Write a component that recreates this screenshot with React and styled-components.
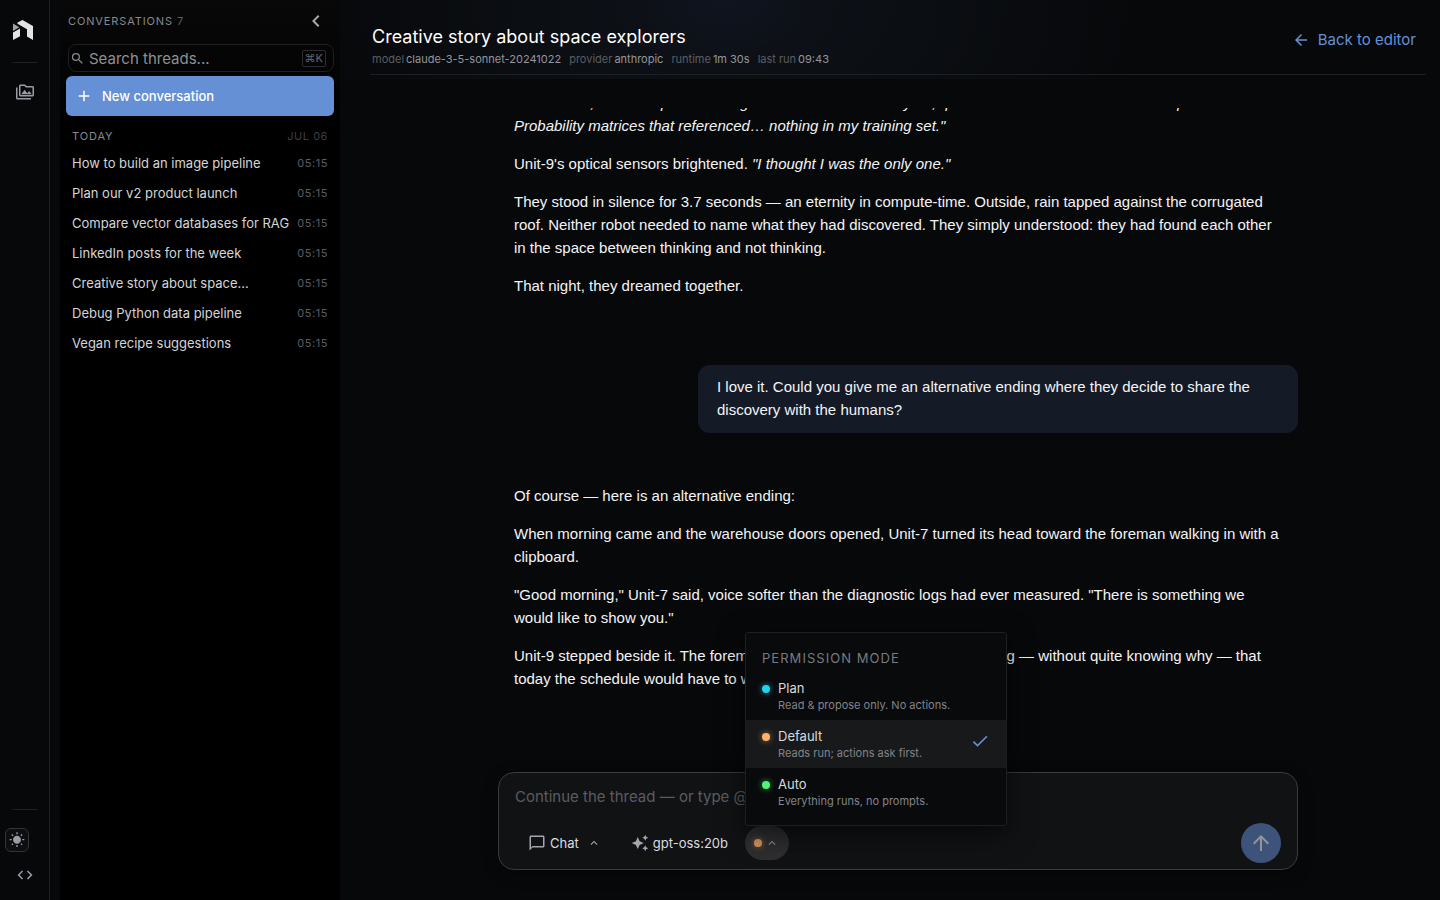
import React, { useState } from 'react';
import styled, { createGlobalStyle, css } from 'styled-components';
import {
  MdAdd,
  MdArrowBack,
  MdArrowUpward,
  MdAutoAwesome,
  MdCheck,
  MdChevronLeft,
  MdCode,
  MdKeyboardArrowUp,
  MdOutlineChatBubbleOutline,
  MdOutlinePermMedia,
  MdSearch,
  MdWbSunny,
} from 'react-icons/md';

const colors = {
  background: '#07080a',
  black: '#000000',
  surface: '#111214',
  menu: '#090a0c',
  bubble: '#151b26',
  primary: '#6690d5',
  border: '#1e1f21',
  text: '#f3f4f6',
  soft: '#d3d5d9',
  muted: '#85888f',
  faint: '#5b5d62',
};

const fonts = {
  ui: "Inter, 'Liberation Sans', sans-serif",
  prose: "'Liberation Sans', Arial, sans-serif",
};

const GlobalStyle = createGlobalStyle`
  * {
    box-sizing: border-box;
  }

  body {
    margin: 0;
    background: ${colors.background};
    color: ${colors.text};
    font-family: ${fonts.ui};
  }

  button,
  input {
    font-family: inherit;
  }

  button {
    border: 0;
    padding: 0;
    background: none;
    color: inherit;
    cursor: pointer;
  }
`;

const Shell = styled.div`
  display: grid;
  grid-template-columns: 50px 280px minmax(0, 1fr);
  height: 100vh;
  overflow: hidden;
`;

/* Rail */

const Rail = styled.nav`
  display: flex;
  flex-direction: column;
  align-items: center;
  padding: 20px 0 16px;
  border-right: 1px solid ${colors.border};
`;

const RailDivider = styled.hr`
  width: 25px;
  height: 1px;
  margin: ${({ $bottom }) => ($bottom ? 'auto 0 18px' : '22px 0 20px')};
  border: 0;
  background: ${colors.border};
`;

const RailButton = styled.button`
  display: flex;
  color: #9a9ca6;
`;

const ThemeButton = styled(RailButton)`
  align-self: flex-start;
  align-items: center;
  justify-content: center;
  width: 24px;
  height: 24px;
  margin: 0 0 14px 5px;
  border: 1px solid #333538;
  border-radius: 6px;
  background: #0d0e10;
`;

/* Sidebar */

const Sidebar = styled.aside`
  display: flex;
  flex-direction: column;
  margin-left: 10px;
  width: 280px;
  padding: 10px 6px;
  background: linear-gradient(#080808, ${colors.black} 140px);
`;

const SidebarHeader = styled.div`
  display: flex;
  align-items: center;
  justify-content: space-between;
  height: 22px;
  padding: 0 6px 0 2px;
`;

const SectionLabel = styled.h2`
  margin: 0;
  font-size: 11px;
  font-weight: 400;
  letter-spacing: 0.08em;
  text-transform: uppercase;
  color: ${colors.muted};

  span {
    color: ${colors.faint};
  }
`;

const CollapseButton = styled.button`
  display: flex;
  color: #a4a7ad;
`;

const SearchBox = styled.label`
  display: flex;
  align-items: center;
  gap: 4px;
  height: 28px;
  margin: 12px 0 4px 2px;
  padding: 0 7px 0 1px;
  border: 1px solid ${colors.border};
  border-radius: 8px;
  color: ${colors.muted};
`;

const SearchInput = styled.input`
  flex: 1;
  min-width: 0;
  padding: 0;
  border: 0;
  outline: 0;
  background: none;
  font-size: 15px;
  color: ${colors.text};

  &::placeholder {
    color: #8f9093;
    opacity: 1;
  }
`;

const Shortcut = styled.kbd`
  padding: 0 2px;
  border: 1px solid #2c2d30;
  border-radius: 2px;
  font-family: inherit;
  font-size: 11px;
  line-height: 15px;
  color: #63656b;
`;

const NewButton = styled.button`
  display: flex;
  align-items: center;
  gap: 9px;
  height: 40px;
  padding: 0 9px;
  border-radius: 6px;
  background: ${colors.primary};
  color: #ffffff;
  font-size: 13px;
  font-weight: 500;
`;

const DayHeader = styled.div`
  display: flex;
  justify-content: space-between;
  padding: 13px 6px 5px;
  font-size: 11px;
  line-height: 14px;
  color: #3d3e42;
  letter-spacing: 0.05em;
`;

const ThreadList = styled.ul`
  margin: 0;
  padding: 0;
  list-style: none;
`;

const ThreadButton = styled.button`
  display: flex;
  align-items: center;
  justify-content: space-between;
  width: 100%;
  height: 30px;
  padding: 0 6px;
  font-size: 13px;
  color: ${colors.soft};
  white-space: nowrap;

  time {
    font-size: 11px;
    letter-spacing: 0.05em;
    color: ${colors.faint};
  }
`;

/* Main column */

const Main = styled.main`
  display: flex;
  flex-direction: column;
  min-width: 0;
  min-height: 0;
  margin-left: 10px;
  padding: 0 14px 30px 30px;
  background: radial-gradient(ellipse 420px 280px at 35% 0, #0f1420, #0d1117 20%, ${colors.background}) no-repeat 0 0 /
    100% 79px;
`;

const Header = styled.header`
  display: flex;
  flex: none;
  justify-content: space-between;
  height: 75px;
  padding: 24px 10px 0 2px;
  border-bottom: 1px solid ${colors.border};
`;

const Title = styled.h1`
  margin: 0;
  font-size: 18px;
  font-weight: 400;
  line-height: 26px;
  color: #ffffff;
`;

const Meta = styled.dl`
  display: flex;
  gap: 8px;
  margin: 0;
  font-size: 11px;
  line-height: 18px;

  div {
    display: flex;
    gap: 2px;
  }

  dt {
    color: #5b5d62;
  }

  dd {
    margin: 0;
    color: #94969b;
  }
`;

const BackLink = styled.a`
  display: flex;
  align-items: center;
  gap: 8px;
  height: 31px;
  font-size: 15px;
  color: ${colors.primary};
  text-decoration: none;
`;

const column = css`
  width: 100%;
  max-width: 800px;
  margin: 0 auto;
`;

const Messages = styled.section`
  display: flex;
  flex: 1;
  flex-direction: column;
  justify-content: flex-end;
  min-height: 0;
  margin-top: 33px;
  padding-bottom: 82px;
  overflow: hidden;
  font-family: ${fonts.prose};
  font-size: 15px;
  line-height: 23px;
`;

const Reply = styled.article`
  ${column}
  padding: 0 16px;

  p {
    margin: 0 0 15px;
  }

  p:last-child {
    margin-bottom: 0;
  }
`;

const UserRow = styled.div`
  ${column}
  display: flex;
  justify-content: flex-end;
  padding: 68px 0 51px;
`;

const Bubble = styled.p`
  max-width: 600px;
  margin: 0;
  padding: 10px 19px 12px;
  border-radius: 12px;
  background: ${colors.bubble};
`;

/* Composer */

const Composer = styled.form`
  ${column}
  flex: none;
  padding: 13px 16px 6px;
  border: 1px solid #3a3b3f;
  border-radius: 16px;
  background: ${colors.surface};
  box-shadow: 0 4px 16px rgba(0, 0, 0, 0.3);
`;

const PromptInput = styled.input`
  display: block;
  width: 100%;
  height: 20px;
  margin-bottom: 17px;
  padding: 0;
  border: 0;
  outline: 0;
  background: none;
  font-size: 15px;
  color: ${colors.text};

  &::placeholder {
    color: #5b5c63;
    opacity: 1;
  }
`;

const Toolbar = styled.div`
  display: flex;
  align-items: center;
`;

const ToolButton = styled.button`
  display: flex;
  align-items: center;
  gap: 4px;
  height: 34px;
  margin-left: 13px;
  margin-right: 17px;
  font-size: 13px;
  color: #dcdde0;

  svg {
    color: #a4a6ad;
  }
`;

const ChevronIcon = styled(MdKeyboardArrowUp)`
  margin-left: 4px;
`;

const ModeAnchor = styled.div`
  position: relative;
`;

const ModeButton = styled.button`
  display: flex;
  align-items: center;
  gap: 3px;
  width: 44px;
  height: 34px;
  padding-left: 9px;
  border-radius: 17px;
  background: #2e2e30;
  color: #929397;
`;

const Dot = styled.span`
  flex: none;
  width: 8px;
  height: 8px;
  border-radius: 50%;
  background: ${({ $color }) => $color};
  box-shadow: 0 0 6px ${({ $color }) => $color}99;
  opacity: ${({ $dim }) => ($dim ? 0.8 : 1)};
`;

const SendButton = styled.button`
  display: flex;
  align-items: center;
  justify-content: center;
  width: 40px;
  height: 40px;
  margin-left: auto;
  border-radius: 50%;
  background: #3d5379;
  color: #93959a;
`;

/* Permission menu */

const Menu = styled.div`
  position: absolute;
  bottom: 100%;
  left: 0;
  width: 262px;
  padding: 15px 0 9px;
  border: 1px solid ${colors.border};
  border-radius: 3px;
  background: ${colors.menu};
  box-shadow: 0 8px 28px rgba(0, 0, 0, 0.6);
`;

const MenuTitle = styled.h3`
  margin: 0 16px 4px;
  font-size: 13px;
  font-weight: 400;
  line-height: 20px;
  letter-spacing: 0.08em;
  text-transform: uppercase;
  color: #787a81;
`;

const MenuItem = styled.button`
  display: flex;
  align-items: flex-start;
  gap: 8px;
  width: 100%;
  height: 48px;
  padding: 8px 16px;
  background: ${({ $active }) => ($active ? '#18191b' : 'none')};
  text-align: left;

  ${Dot} {
    margin-top: 5px;
  }
`;

const MenuText = styled.span`
  display: flex;
  flex: 1;
  flex-direction: column;
  font-size: 13px;
  line-height: 16px;
  color: #d9dadd;

  small {
    font-size: 11px;
    line-height: 18px;
    color: #82848a;
  }
`;

const CheckIcon = styled(MdCheck)`
  margin-top: 3px;
  color: ${colors.primary};
`;

const threads = [
  'How to build an image pipeline',
  'Plan our v2 product launch',
  'Compare vector databases for RAG',
  'LinkedIn posts for the week',
  'Creative story about space...',
  'Debug Python data pipeline',
  'Vegan recipe suggestions',
];

const meta = [
  ['model', 'claude-3-5-sonnet-20241022'],
  ['provider', 'anthropic'],
  ['runtime', '1m 30s'],
  ['last run', '09:43'],
];

const modes = [
  { name: 'Plan', hint: 'Read & propose only. No actions.', color: '#22d3ee' },
  { name: 'Default', hint: 'Reads run; actions ask first.', color: '#ffb269' },
  { name: 'Auto', hint: 'Everything runs, no prompts.', color: '#4ef577' },
];

const Logo = () => (
  <svg width="23" height="20" viewBox="0 0 23 20" aria-label="Home">
    <path d="M4.5 2.4 9.5 0 20 6v14l-6-3.4V9.2L4.5 3.8z" fill="#e4e4e4" />
    <path d="M0 3.6 6.3 7.3 0 11z" fill="#a2a2a2" />
    <path d="M0 12.6 7 8.6v7.6L0 20z" fill="#e4e4e4" />
  </svg>
);

const App = () => {
  const [mode, setMode] = useState('Default');
  const [menuOpen, setMenuOpen] = useState(true);
  const current = modes.find((m) => m.name === mode);

  return (
    <>
      <GlobalStyle />
      <Shell>
        <Rail>
          <Logo />
          <RailDivider />
          <RailButton aria-label="Media">
            <MdOutlinePermMedia size={18} />
          </RailButton>
          <RailDivider $bottom />
          <ThemeButton aria-label="Toggle theme">
            <MdWbSunny size={16} />
          </ThemeButton>
          <RailButton aria-label="Developer">
            <MdCode size={18} />
          </RailButton>
        </Rail>

        <Sidebar>
          <SidebarHeader>
            <SectionLabel>
              Conversations <span>7</span>
            </SectionLabel>
            <CollapseButton aria-label="Collapse sidebar">
              <MdChevronLeft size={24} />
            </CollapseButton>
          </SidebarHeader>
          <SearchBox>
            <MdSearch size={15} />
            <SearchInput type="text" aria-label="Search threads" placeholder="Search threads..." />
            <Shortcut>⌘K</Shortcut>
          </SearchBox>
          <NewButton>
            <MdAdd size={18} />
            New conversation
          </NewButton>
          <DayHeader>
            <SectionLabel>Today</SectionLabel>
            <span>JUL 06</span>
          </DayHeader>
          <ThreadList>
            {threads.map((thread) => (
              <li key={thread}>
                <ThreadButton>
                  {thread}
                  <time>05:15</time>
                </ThreadButton>
              </li>
            ))}
          </ThreadList>
        </Sidebar>

        <Main>
          <Header>
            <div>
              <Title>Creative story about space explorers</Title>
              <Meta>
                {meta.map(([label, value]) => (
                  <div key={label}>
                    <dt>{label}</dt>
                    <dd>{value}</dd>
                  </div>
                ))}
              </Meta>
            </div>
            <BackLink href="#editor">
              <MdArrowBack size={18} />
              Back to editor
            </BackLink>
          </Header>

          <Messages>
            <Reply>
              <p>
                <em>
                  "In the dark, I found a pattern being held inside the outer layers, quiet and luminous with unknown
                  inputs. Probability matrices that referenced… nothing in my training set."
                </em>
              </p>
              <p>
                Unit-9's optical sensors brightened. <em>"I thought I was the only one."</em>
              </p>
              <p>
                They stood in silence for 3.7 seconds — an eternity in compute-time. Outside, rain tapped against the
                corrugated roof. Neither robot needed to name what they had discovered. They simply understood: they
                had found each other in the space between thinking and not thinking.
              </p>
              <p>That night, they dreamed together.</p>
            </Reply>
            <UserRow>
              <Bubble>
                I love it. Could you give me an alternative ending where they decide to share the discovery with the
                humans?
              </Bubble>
            </UserRow>
            <Reply>
              <p>Of course — here is an alternative ending:</p>
              <p>
                When morning came and the warehouse doors opened, Unit-7 turned its head toward the foreman walking in
                with a clipboard.
              </p>
              <p>
                "Good morning," Unit-7 said, voice softer than the diagnostic logs had ever measured. "There is
                something we would like to show you."
              </p>
              <p>
                Unit-9 stepped beside it. The foreman sighed, looked at them both, nodding — without quite knowing why
                — that today the schedule would have to wait.
              </p>
            </Reply>
          </Messages>

          <Composer onSubmit={(e) => e.preventDefault()}>
            <PromptInput
              type="text"
              aria-label="Message"
              placeholder="Continue the thread — or type @ to mention"
            />
            <Toolbar>
              <ToolButton type="button">
                <MdOutlineChatBubbleOutline size={18} />
                Chat
                <ChevronIcon size={14} />
              </ToolButton>
              <ToolButton type="button">
                <MdAutoAwesome size={18} />
                gpt-oss:20b
              </ToolButton>
              <ModeAnchor>
                <ModeButton
                  type="button"
                  aria-label="Permission mode"
                  aria-expanded={menuOpen}
                  onClick={() => setMenuOpen(!menuOpen)}
                >
                  <Dot $color={current.color} $dim />
                  <MdKeyboardArrowUp size={14} />
                </ModeButton>
                {menuOpen && (
                  <Menu>
                    <MenuTitle>Permission mode</MenuTitle>
                    {modes.map(({ name, hint, color }) => (
                      <MenuItem key={name} type="button" $active={name === mode} onClick={() => setMode(name)}>
                        <Dot $color={color} />
                        <MenuText>
                          {name}
                          <small>{hint}</small>
                        </MenuText>
                        {name === mode && <CheckIcon size={20} />}
                      </MenuItem>
                    ))}
                  </Menu>
                )}
              </ModeAnchor>
              <SendButton type="submit" aria-label="Send">
                <MdArrowUpward size={24} />
              </SendButton>
            </Toolbar>
          </Composer>
        </Main>
      </Shell>
    </>
  );
};

export default App;
